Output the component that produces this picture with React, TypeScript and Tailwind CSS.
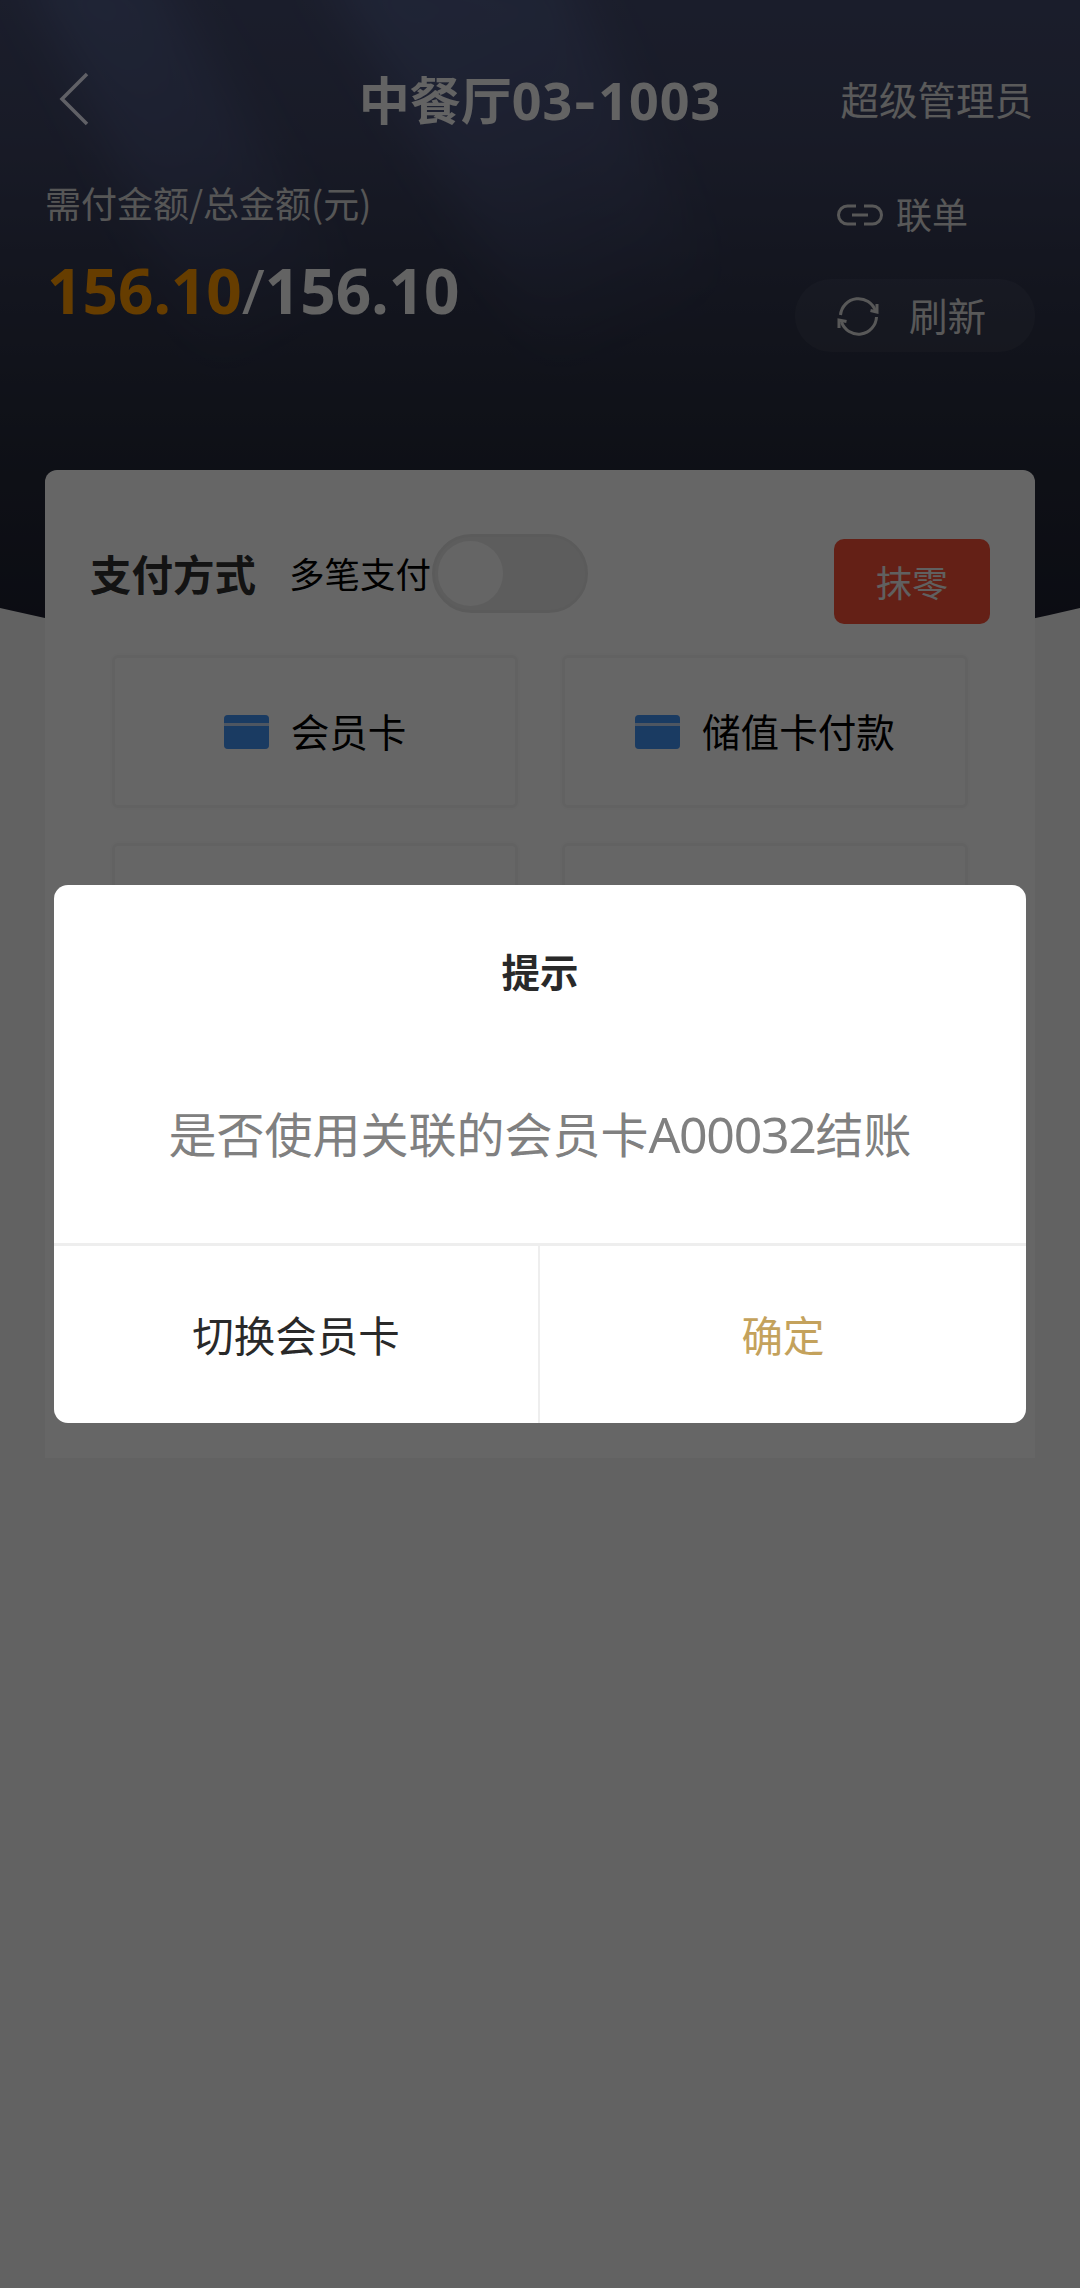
import React from 'react';

function HeaderBackdrop() {
  return (
    <svg className="absolute inset-x-0 top-0 h-[680px] w-[1080px]" viewBox="0 0 1080 680" aria-hidden="true">
      <defs>
        <linearGradient id="sky" x1="0" y1="0" x2="0" y2="1">
          <stop offset="0" stopColor="#434a6c" />
          <stop offset="0.2" stopColor="#3e4462" />
          <stop offset="0.4" stopColor="#32374f" />
          <stop offset="0.65" stopColor="#262b3b" />
          <stop offset="1" stopColor="#1b1c2c" />
        </linearGradient>
        <linearGradient id="beam" x1="0" y1="0" x2="0.5" y2="1">
          <stop offset="0" stopColor="#5d72a8" stopOpacity="0.5" />
          <stop offset="0.5" stopColor="#5d6aa0" stopOpacity="0.35" />
          <stop offset="1" stopColor="#5d6aa0" stopOpacity="0" />
        </linearGradient>
        <filter id="soft" x="-30%" y="-30%" width="160%" height="160%">
          <feGaussianBlur stdDeviation="24" />
        </filter>
        <clipPath id="curve">
          <path d="M0 0H1080V608Q540 736 0 608Z" />
        </clipPath>
      </defs>
      <g clipPath="url(#curve)">
        <rect width="1080" height="680" fill="url(#sky)" />
        <g filter="url(#soft)" fill="url(#beam)">
          <path d="M20 -40H150L400 380H220Z" />
          <path d="M320 -40H560L760 380H560Z" />
        </g>
      </g>
    </svg>
  );
}

function LinkIcon() {
  return (
    <svg className="h-[22px] w-[48px]" viewBox="0 0 48 22" fill="none" stroke="currentColor" strokeWidth="3">
      <path d="M20 2H11.500A9 9 0 0 0 11.500 20H20" />
      <path d="M28 2H36.500A9 9 0 0 1 36.500 20H28" />
      <path d="M16 11H32" />
    </svg>
  );
}

function RefreshIcon() {
  return (
    <svg className="h-[42px] w-[44px]" viewBox="0 0 44 42" fill="none" stroke="currentColor" strokeWidth="3">
      <path d="M3.500 20A18 18 0 0 1 38.500 16" />
      <path d="M39.500 22A18 18 0 0 1 4.500 27" />
      <path d="M33.500 15.500L40 17V9" />
      <path d="M9.500 26.500L2 25V33" />
    </svg>
  );
}

function CardIcon() {
  return (
    <div className="flex h-[34px] w-[45px] flex-col gap-[3px] overflow-hidden rounded-[4px] bg-[#c4d6f2]">
      <div className="h-[8px] bg-[#4294f5]" />
      <div className="flex-1 bg-[#4294f5]" />
    </div>
  );
}

function PayCard({ label }: { label?: string }) {
  return (
    <div className="flex h-[153px] items-center justify-center rounded-[6px] border-[3px] border-[#f5f5f5] shadow-[0_0_6px_rgba(0,0,0,0.03)]">
      {label && (
        <div className="flex items-center gap-[22px]">
          <CardIcon />
          <span className="-mt-[4px] text-[38.600px] leading-[56px] text-black">{label}</span>
        </div>
      )}
    </div>
  );
}

export default function App() {
  return (
    <div className="relative h-[2288px] w-[1080px] overflow-hidden whitespace-nowrap bg-[#f5f5f5] font-['Noto_Sans_CJK_SC',sans-serif]">
      <HeaderBackdrop />
      <div className="relative">
        <header className="flex h-[470px] flex-col text-white">
          <div className="mt-[58px] grid h-[80px] grid-cols-[313px_454px_1fr] items-center">
            <svg className="ml-[58px] h-[54px] w-[32px]" viewBox="0 0 32 54" fill="none" stroke="#f0f0ff" strokeWidth="3.500">
              <path d="M29 2L4 27L29 52" />
            </svg>
            <h1 className="text-center text-[51px] font-bold leading-[80px] text-[#f8f8f8]">
              中餐厅<span className="font-['Noto_Sans'] text-[52px] tracking-[1px]">03<span className="inline-block w-[25px] origin-center scale-x-125 text-center">-</span>1003</span>
            </h1>
            <span className="pr-[47px] text-right text-[38.500px] text-[#e0e0e0]">超级管理员</span>
          </div>
          <div className="flex justify-between px-[45px]">
            <div className="pt-[40px]">
              <div className="text-[36px] leading-[48px] text-[#d8d8d8]">需付金额/总金额(元)</div>
              <div className="ml-[2px] mt-[24px] font-['Noto_Sans'] text-[62px] font-bold leading-[80px]">
                <span className="text-[#ff9900]">156.10</span>
                <span className="font-normal">/</span>
                <span className="text-[#f8f8f8]">156.10</span>
              </div>
            </div>
            <div className="flex flex-col text-[#dcdcdc]">
              <div className="ml-[41px] mt-[52px] flex h-[50px] items-center gap-[12px] text-[36px]">
                <LinkIcon />
                <span className="-mt-[4px]">联单</span>
              </div>
              <div className="mt-[39px] flex h-[73px] w-[240px] items-center rounded-full bg-white/5 pl-[42px] text-[38.600px]">
                <RefreshIcon />
                <span className="-mt-[2px] ml-[28px]">刷新</span>
              </div>
            </div>
          </div>
        </header>

        <main className="mx-[45px] h-[988px] rounded-t-[12px] bg-white pt-[64px]">
          <div className="flex h-[90px] px-[45px]">
            <div className="flex h-[79px] items-center">
              <h2 className="-mt-[1px] text-[41.500px] font-bold text-[#303030]">支付方式</h2>
              <span className="-mt-[2px] ml-[33px] text-[35.500px] text-black">多笔支付</span>
              <div className="ml-px flex h-[79px] w-[156px] items-center rounded-full border-[3px] border-[#e4e4e4] bg-[#e9e9e9] pl-[3px]">
                <div className="size-[65px] rounded-full bg-white/90" />
              </div>
            </div>
            <button className="ml-auto mt-[5px] h-[85px] w-[156px] rounded-[10px] bg-[#f95039] pb-[2px] text-[36px] text-[#f0f0f0]">抹零</button>
          </div>
          <div className="mt-[31px] grid grid-cols-2 gap-x-[44px] gap-y-[35px] px-[67px]">
            <PayCard label="会员卡" />
            <PayCard label="储值卡付款" />
            <PayCard />
            <PayCard />
          </div>
        </main>
      </div>

      <div className="absolute inset-0 bg-black/60">
        <div role="dialog" className="mx-auto mt-[885px] flex h-[538px] w-[972px] flex-col rounded-[14px] bg-white">
          <h3 className="mt-[57px] text-center text-[38.500px] font-bold leading-[56px] text-[#292929]">提示</h3>
          <p className="mt-[99px] text-center text-[48px] leading-[70px] text-[#808080]">
            是否使用关联的会员卡<span className="font-['Noto_Sans'] text-[50px] tracking-[-1.300px]">A00032</span>结账
          </p>
          <div className="mt-auto grid h-[180px] grid-cols-2 border-t-[3px] border-[#eeeeee] text-[41.500px]">
            <button className="border-r-[2px] border-[#eeeeee] pb-px text-[#292929]">切换会员卡</button>
            <button className="pb-px text-[#c4a25c]">确定</button>
          </div>
        </div>
      </div>
    </div>
  );
}
